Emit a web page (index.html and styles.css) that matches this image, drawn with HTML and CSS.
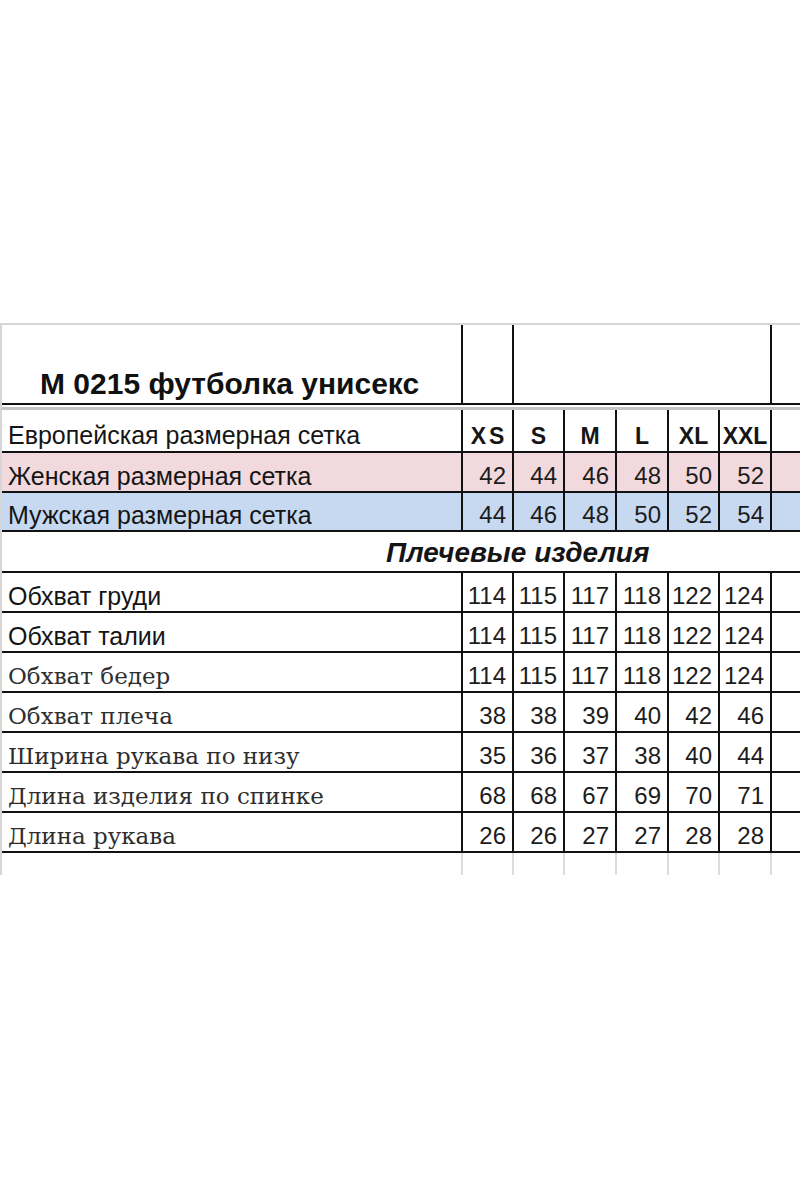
FILE: index.html
```html
<!DOCTYPE html>
<html lang="ru">
<head>
<meta charset="utf-8">
<title>M 0215 футболка унисекс</title>
<link rel="stylesheet" href="styles.css">
</head>
<body>
<div class="sheet">
  <div class="row title">
    <div class="c label"><span>M 0215 футболка унисекс</span></div>
    <div class="c v"></div>
    <div class="c v span5"></div>
    <div class="c v"></div>
  </div>
  <div class="divider"></div>
  <div class="row euro">
    <div class="c label">Европейская размерная сетка</div>
    <div class="c v sz xs">XS</div>
    <div class="c v sz">S</div>
    <div class="c v sz">M</div>
    <div class="c v sz">L</div>
    <div class="c v sz">XL</div>
    <div class="c v sz">XXL</div>
    <div class="c v"></div>
  </div>
  <div class="row pink">
    <div class="c label">Женская размерная сетка</div>
    <div class="c v n">42</div><div class="c v n">44</div><div class="c v n">46</div><div class="c v n">48</div><div class="c v n">50</div><div class="c v n">52</div>
    <div class="c v"></div>
  </div>
  <div class="row blue">
    <div class="c label">Мужская размерная сетка</div>
    <div class="c v n">44</div><div class="c v n">46</div><div class="c v n">48</div><div class="c v n">50</div><div class="c v n">52</div><div class="c v n">54</div>
    <div class="c v"></div>
  </div>
  <div class="row section">
    <div class="c full">Плечевые изделия</div>
  </div>
  <div class="row data">
    <div class="c label">Обхват груди</div>
    <div class="c v n">114</div><div class="c v n">115</div><div class="c v n">117</div><div class="c v n">118</div><div class="c v n">122</div><div class="c v n">124</div>
    <div class="c v"></div>
  </div>
  <div class="row data">
    <div class="c label">Обхват талии</div>
    <div class="c v n">114</div><div class="c v n">115</div><div class="c v n">117</div><div class="c v n">118</div><div class="c v n">122</div><div class="c v n">124</div>
    <div class="c v"></div>
  </div>
  <div class="row data">
    <div class="c label serif">Обхват бедер</div>
    <div class="c v n">114</div><div class="c v n">115</div><div class="c v n">117</div><div class="c v n">118</div><div class="c v n">122</div><div class="c v n">124</div>
    <div class="c v"></div>
  </div>
  <div class="row data">
    <div class="c label serif">Обхват плеча</div>
    <div class="c v n">38</div><div class="c v n">38</div><div class="c v n">39</div><div class="c v n">40</div><div class="c v n">42</div><div class="c v n">46</div>
    <div class="c v"></div>
  </div>
  <div class="row data">
    <div class="c label serif">Ширина рукава по низу</div>
    <div class="c v n">35</div><div class="c v n">36</div><div class="c v n">37</div><div class="c v n">38</div><div class="c v n">40</div><div class="c v n">44</div>
    <div class="c v"></div>
  </div>
  <div class="row data">
    <div class="c label serif">Длина изделия по спинке</div>
    <div class="c v n">68</div><div class="c v n">68</div><div class="c v n">67</div><div class="c v n">69</div><div class="c v n">70</div><div class="c v n">71</div>
    <div class="c v"></div>
  </div>
  <div class="row data">
    <div class="c label serif">Длина рукава</div>
    <div class="c v n">26</div><div class="c v n">26</div><div class="c v n">27</div><div class="c v n">27</div><div class="c v n">28</div><div class="c v n">28</div>
    <div class="c v"></div>
  </div>
  <div class="row tail">
    <div class="c"></div>
    <div class="c g"></div><div class="c g"></div><div class="c g"></div><div class="c g"></div><div class="c g"></div><div class="c g"></div>
    <div class="c g"></div>
  </div>
</div>
</body>
</html>
```

FILE: styles.css
```css
html, body {
  margin: 0;
  padding: 0;
  background: #ffffff;
}

body {
  font-family: "Liberation Sans", Arial, sans-serif;
  color: #151515;
}

.sheet {
  margin-top: 323px;
  border-top: 2px solid #d6d6d6;
  border-left: 2px solid #d6d6d6;
  width: 798px;
}

.row {
  display: grid;
  grid-template-columns: 459px 51px 51px 52px 52px 51px 52px 1fr;
  box-sizing: border-box;
  border-bottom: 2px solid #111111;
}

.c {
  box-sizing: border-box;
  display: flex;
  align-items: flex-end;
  line-height: 1;
  min-width: 0;
  white-space: nowrap;
}

.v {
  border-left: 2px solid #111111;
}

.span5 {
  grid-column: span 5;
}

.label {
  padding-left: 6px;
  font-size: 25px;
  padding-bottom: 2px;
}

.title {
  height: 80px;
}

.title .label {
  font-size: 30px;
  font-weight: bold;
  padding-left: 38px;
  padding-bottom: 4px;
  color: #111111;
}

.divider {
  box-sizing: border-box;
  height: 5px;
  border-bottom: 3px solid #c4c4c4;
}

.euro {
  height: 43px;
}

.euro .label {
  padding-bottom: 3px;
}

.sz {
  justify-content: center;
  font-weight: bold;
  font-size: 23px;
  padding-bottom: 3px;
}

.xs {
  letter-spacing: 3px;
  padding-left: 3px;
}

.pink {
  height: 40px;
  background: #f1d9dd;
}

.blue {
  height: 39px;
  background: #c6d9f1;
}

.n {
  justify-content: flex-end;
  padding-right: 6px;
  font-size: 24px;
  padding-bottom: 3px;
  color: #1c1c1c;
}

.section {
  height: 41px;
  grid-template-columns: 1fr;
}

.full {
  padding-left: 384px;
  font-size: 28px;
  font-weight: bold;
  font-style: italic;
  padding-bottom: 4px;
}

.data {
  height: 40px;
}

.serif {
  font-family: "DejaVu Serif", "Liberation Serif", serif;
  font-size: 23px;
  color: #2e2e2e;
  padding-bottom: 3px;
}

.tail {
  height: 22px;
  border-bottom: none;
}

.g {
  border-left: 2px solid #dcdcdc;
}
```
